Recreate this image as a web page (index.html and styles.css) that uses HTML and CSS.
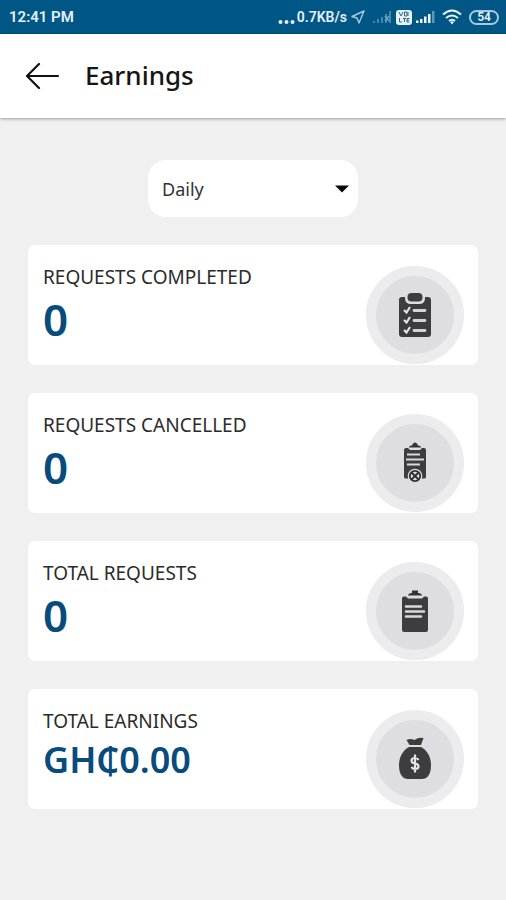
FILE: index.html
```html
<!DOCTYPE html>
<html lang="en">
<head>
<meta charset="utf-8">
<meta name="viewport" content="width=device-width, initial-scale=1">
<title>Earnings</title>
<link rel="stylesheet" href="styles.css">
</head>
<body>
<div class="status">
  <span class="clock">12:41 PM</span>
  <div class="indicators">
    <svg width="17" height="6" viewBox="0 0 17 6" fill="#e6f1f7"><circle cx="2.5" cy="3" r="2"/><circle cx="8.5" cy="3" r="2"/><circle cx="14.5" cy="3" r="2"/></svg>
    <span class="speed">0.7KB/s</span>
    <svg class="nav" width="14" height="14" viewBox="0 0 14 14" fill="none" stroke="#a5c9dd" stroke-width="1.4" stroke-linejoin="round"><path d="M13 1 1 6.5l5 1.5 2 5z"/></svg>
    <svg class="sim" width="20" height="14" viewBox="0 0 20 14" fill="#4686aa"><path d="M1 11h2v2H1zM5 9h2v4H5zM9 7h2v6H9zM13 4h2v9h-2zM17 1h2v12h-2z"/><path d="m13 6 4 5m0-5-4 5" stroke="#6fa5c3" stroke-width="1.3"/></svg>
    <svg class="lte" width="16" height="15" viewBox="0 0 16 15"><rect width="16" height="15" rx="3" fill="#e8f4fa"/><path d="m3 2 2 4 2-4m1.500 0h2.500v4H8.500zM12 2v4M3.500 8v4H6M7 8.500h3M8.500 8v4M13.500 8.500H11v3.500h2.500M11 10.200h2" fill="none" stroke="#28688f" stroke-width="1"/></svg>
    <svg class="bars" width="19" height="14" viewBox="0 0 19 14" fill="#f0f8fc"><path d="M0 10.500h2.500V13H0zM4 9h2.500v4H4zM8 6.500h2.500V13H8zM12 4h2.500v9H12z"/><path d="M16 1h2.500v12H16z" fill="#5d98b9"/></svg>
    <svg class="wifi" width="20" height="16" viewBox="0 0 20 16" fill="none" stroke="#e8f4fa" stroke-width="2"><path d="M1 5.500q9-8 18 0M4 9q6-5 12 0M7 12q3-2.500 6 0"/><path d="m8 13 2 2.500 2-2.500q-2-1.500-4 0z" fill="#e8f4fa" stroke="none"/></svg>
    <span class="battery">54</span>
  </div>
</div>
<header class="bar">
  <button class="back" type="button" aria-label="Back">
    <svg width="34" height="28" viewBox="0 0 34 28" fill="none" stroke="#111" stroke-width="2.2" stroke-linecap="round" stroke-linejoin="round"><path d="M32 14H1M13 2 1 14l12 12"/></svg>
  </button>
  <h1>Earnings</h1>
</header>
<main>
  <div class="period">
    <select aria-label="Period"><option>Daily</option><option>Weekly</option><option>Monthly</option></select>
    <svg class="caret" width="14" height="8" viewBox="0 0 14 8"><path d="M0 0.500h14L7 7.500z" fill="#0a0a0a"/></svg>
  </div>
  <section class="card">
    <div class="info"><h2>REQUESTS COMPLETED</h2><p class="count">0</p></div>
    <div class="badge"><svg width="34" height="46" viewBox="0 0 34 46"><rect x="1" y="5" width="32" height="40" rx="3" fill="#3d3d3f"/><path d="M7 3h20v3q0 6-6 6h-8q-6 0-6-6z" fill="#dedde2"/><rect x="9.500" y="1" width="15" height="8.500" rx="4" fill="#3d3d3f"/><path d="M16 18.500h11M16 28.500h11M16 38.500h11" stroke="#d5d4d8" stroke-width="2.800" stroke-linecap="round"/><path d="m6 18 2.500 2.500L12 15M6 28l2.500 2.500L12 25M6 38l2.500 2.500L12 35" fill="none" stroke="#e5e4e8" stroke-width="2.200"/></svg></div>
  </section>
  <section class="card">
    <div class="info"><h2>REQUESTS CANCELLED</h2><p class="count">0</p></div>
    <div class="badge"><svg width="34" height="46" viewBox="0 0 34 46"><path d="M11 7.500q0-2 3-2 1-3 3-3t3 3q3 0 3 2z" fill="#343436"/><path d="M8 8q-2 0-2 2v27q0 1.500 2 1.500h18q2 0 2-1.500V10q0-2-2-2h-2l-2 2H12l-2-2z" fill="#3d3d3f"/><path d="M9 14.500h13M8 19.500h18M9 24.500h13" stroke="#d9d8dd" stroke-width="2.200"/><circle cx="17" cy="36" r="7.300" fill="#dedde2"/><circle cx="17" cy="36" r="5.200" fill="#dedde2" stroke="#303032" stroke-width="1.800"/><path d="m13.500 32.500 7 7m0-7-7 7" stroke="#303032" stroke-width="1.900"/></svg></div>
  </section>
  <section class="card">
    <div class="info"><h2>TOTAL REQUESTS</h2><p class="count">0</p></div>
    <div class="badge"><svg width="34" height="46" viewBox="0 0 34 46"><path d="M10 7.500q0-2 4-2.500V2.500h6V5q4 .500 4 2.500z" fill="#343436"/><path d="M6 8.500q-2 0-2 2V42q0 2 2 2h22q2 0 2-2V10.500q0-2-2-2h-2l-2 2H10l-2-2z" fill="#3d3d3f"/><path d="M8 18.500h15M8 23.500h18M8 28.500h15" stroke="#d9d8dd" stroke-width="2.600" stroke-linecap="round"/></svg></div>
  </section>
  <section class="card">
    <div class="info"><h2>TOTAL EARNINGS</h2><p class="amount">GH₵0.00</p></div>
    <div class="badge"><svg width="34" height="46" viewBox="0 0 34 46"><path d="M8.500 4q4-2 8 0 4-3 9-2l-2.500 7H11.500z" fill="#3d3d3f"/><path d="M11 11h12c6 3 10 10 10 18 0 10-4 14-9 14H10C5 43 1 39 1 29c0-8 4-15 10-18z" fill="#3d3d3f"/><path d="M20.500 24q-1-2-3.500-2-3.500 0-3.500 2.500t3.500 3 3.500 3-3.500 2.500q-2.500 0-3.500-2M17 18.500v18" fill="none" stroke="#e5e4e8" stroke-width="2.200"/></svg></div>
  </section>
</main>
</body>
</html>
```
FILE: styles.css
```css
* {
  box-sizing: border-box;
}

body {
  margin: 0;
  min-height: 100vh;
  background: #f0f0f0;
  color: #222;
  font-family: "Noto Sans", "Open Sans", sans-serif;
}

h1, h2, p {
  margin: 0;
}

svg {
  display: block;
  flex: none;
}

.status {
  display: flex;
  align-items: center;
  justify-content: space-between;
  height: 34px;
  padding: 0 7px 0 9px;
  background: #005685;
  color: #e6f1f7;
  font-family: Roboto, sans-serif;
  font-weight: 600;
}

.clock {
  font-size: 15px;
}

.indicators {
  display: flex;
  align-items: center;
}

.indicators svg:first-child {
  align-self: flex-end;
}

.speed {
  margin-left: 2px;
  font-size: 14px;
}

.nav {
  margin-left: 4px;
}

.sim {
  margin-left: 7px;
}

.lte {
  margin-left: 4px;
}

.bars {
  margin-left: 4px;
}

.wifi {
  margin-left: 7px;
}

.battery {
  width: 30px;
  margin-left: 7px;
  border: 2px solid #a5c9dd;
  border-radius: 8px;
  font-size: 12px;
  line-height: 11px;
  text-align: center;
}

.bar {
  display: flex;
  align-items: center;
  gap: 25px;
  height: 84px;
  padding: 0 26px;
  background: #fff;
  box-shadow: 0 1px 3px rgba(0, 0, 0, 0.35);
}

.back {
  padding: 0;
  border: 0;
  background: none;
}

h1 {
  color: #151515;
  font-size: 26px;
  font-weight: 500;
  line-height: 36px;
  padding-bottom: 2px;
}

main {
  display: flex;
  flex-direction: column;
  gap: 28px;
  padding: 42px 28px;
}

.period {
  display: grid;
  align-items: center;
  align-self: center;
  width: 210px;
}

.period select,
.caret {
  grid-area: 1 / 1;
}

.period select {
  width: 100%;
  height: 57px;
  padding: 0 14px;
  border: 0;
  border-radius: 18px;
  appearance: none;
  background: #fff;
  color: #333;
  font-family: inherit;
  font-size: 18px;
}

.caret {
  justify-self: end;
  margin-right: 9px;
  pointer-events: none;
}

.card {
  display: flex;
  align-items: flex-end;
  justify-content: space-between;
  height: 120px;
  padding: 0 14px 1px 15px;
  border-radius: 7px;
  background: #fff;
}

.info {
  align-self: flex-start;
  padding-top: 20px;
}

h2 {
  color: #2b2b2b;
  font-size: 19px;
  font-weight: 400;
  line-height: 24px;
}

.count,
.amount {
  color: #074c7c;
  font-weight: 600;
}

.count {
  font-size: 44px;
  line-height: 61px;
}

.amount {
  font-size: 36px;
  line-height: 54px;
}

.badge {
  display: grid;
  place-items: center;
  width: 98px;
  height: 98px;
  border: 10px solid #ececef;
  border-radius: 50%;
  background: #dedde2;
}
```
